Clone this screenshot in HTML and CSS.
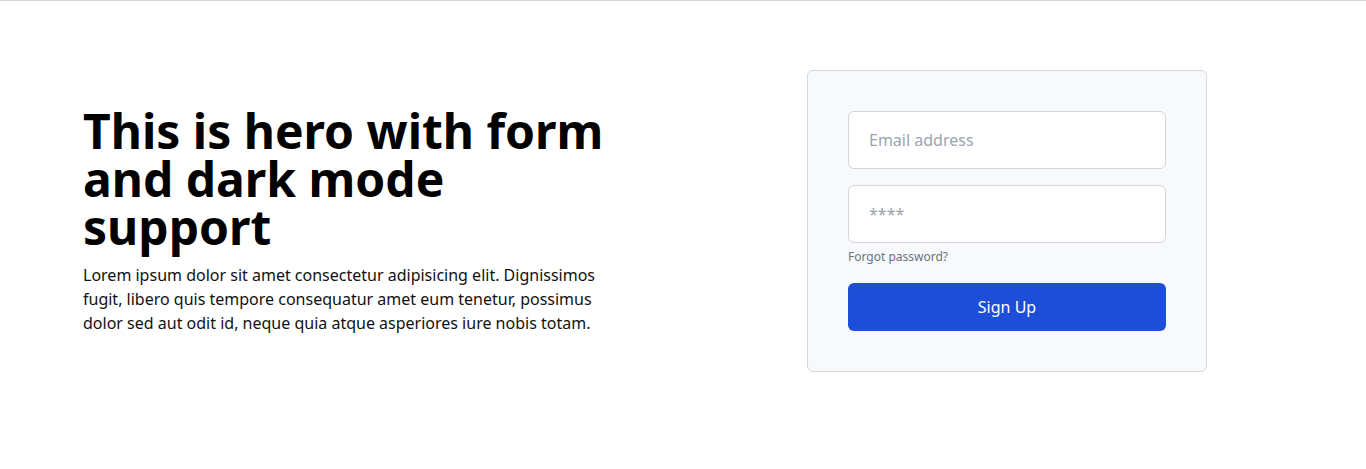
FILE: index.html
```html
<!DOCTYPE html>
<html lang="en">
<head>
<meta charset="utf-8">
<title>Hero with form</title>
<link rel="stylesheet" href="styles.css">
</head>
<body>
<section class="hero">
  <div class="container">
    <div class="hero-text">
      <h1 class="title">This is hero with form and dark mode support</h1>
      <p class="lead">Lorem ipsum dolor sit amet consectetur adipisicing elit. Dignissimos fugit, libero quis tempore consequatur amet eum tenetur, possimus dolor sed aut odit id, neque quia atque asperiores iure nobis totam.</p>
    </div>
    <div class="hero-form">
      <form class="card">
        <input class="field" type="email" placeholder="Email address">
        <input class="field field-pass" type="password" placeholder="****">
        <div class="forgot"><a href="#">Forgot password?</a></div>
        <button class="btn" type="button">Sign Up</button>
      </form>
    </div>
  </div>
</section>
</body>
</html>
```
FILE: styles.css
```css
* { box-sizing: border-box; }
html, body { margin: 0; padding: 0; }
body {
  font-family: "Noto Sans", "Open Sans", sans-serif;
  color: #000;
  background: #fff;
  border-top: 1px solid #d1d5db;
}
.hero {
  padding: 69px 0 97px;
}
.container {
  width: 1200px;
  margin: 0 auto;
  display: grid;
  grid-template-columns: 1fr 1fr;
  column-gap: 96px;
  align-items: center;
}
.title {
  margin: 0 0 12px;
  font-size: 48px;
  line-height: 48px;
  font-weight: 700;
  color: #000;
}
.lead {
  margin: 0;
  font-size: 16px;
  line-height: 24px;
  color: #111;
}
.hero-form {
  display: flex;
  justify-content: center;
}
.card {
  width: 400px;
  padding: 40px;
  background: #f8f9fa;
  border: 1px solid #d4d7dc;
  border-radius: 6px;
  display: flex;
  flex-direction: column;
}
.field {
  display: block;
  width: 100%;
  padding: 16px 20px;
  font-family: inherit;
  font-size: 16px;
  line-height: 24px;
  height: 58px;
  background: #fff;
  border: 1px solid #d1d5db;
  border-radius: 6px;
  color: #111;
  outline: none;
}
.field::placeholder { color: #9ca3af; }
.field-pass { margin-top: 16px; }
.forgot {
  margin-top: 6px;
  font-size: 12px;
  line-height: 16px;
}
.forgot a {
  color: #6b7280;
  text-decoration: none;
}
.btn {
  margin-top: 18px;
  height: 48px;
  width: 100%;
  border: none;
  border-radius: 6px;
  background: #1d4ed8;
  color: #fff;
  font-family: inherit;
  font-size: 16px;
  line-height: 24px;
  cursor: pointer;
}
```
